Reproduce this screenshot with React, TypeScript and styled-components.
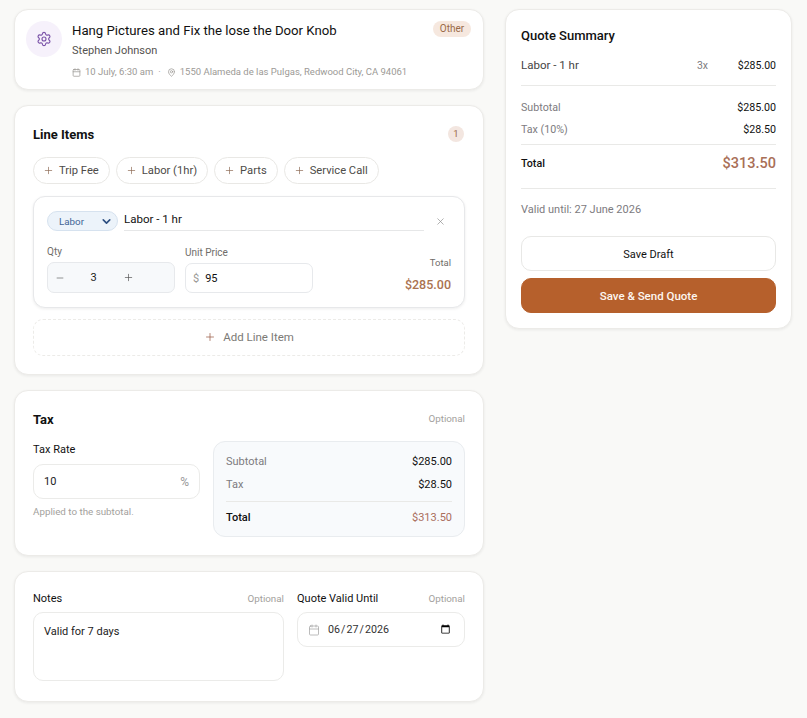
import * as React from 'react'
import styled, { createGlobalStyle } from 'styled-components'
import { Calendar, ChevronDown, MapPin, Minus, Plus, Settings, X } from 'lucide-react'

const GlobalStyle = createGlobalStyle`
  html, body {
    margin: 0;
    background: #f9f9f7;
  }
  * {
    box-sizing: border-box;
  }
  body, input, textarea, button {
    font-family: Roboto, "Noto Sans", sans-serif;
  }
`

const Page = styled.div`
  width: 807px;
  height: 718px;
  padding: 9px 15px 0 14px;
  display: grid;
  grid-template-columns: 470px 287px;
  column-gap: 21px;
  align-items: start;
  overflow: hidden;
`

const Column = styled.div`
  display: flex;
  flex-flow: column;
  gap: 15px;
`

const Card = styled.section<{ $height: number }>`
  height: ${(p) => p.$height}px;
  padding: 18px;
  background: #fff;
  border: 1px solid #ecebe8;
  border-radius: 14px;
  box-shadow: 0 1px 3px rgba(30, 30, 30, 0.07);
`

const JobCard = styled(Card)`
  display: flex;
  gap: 10px;
  padding: 11px;
  position: relative;
`

const JobIcon = styled.div`
  flex: none;
  width: 36px;
  height: 36px;
  border-radius: 50%;
  background: #f6f1fb;
  color: #7a52a8;
  display: flex;
  align-items: center;
  justify-content: center;
`

const JobBody = styled.div`
  display: flex;
  flex-flow: column;
`

const JobTitle = styled.div`
  font-size: 13.2px;
  line-height: 20px;
  font-weight: 400;
  color: #111;
`

const JobCustomer = styled.div`
  margin-top: 2px;
  font-size: 11px;
  line-height: 16px;
  color: #55534f;
`

const JobMeta = styled.div`
  margin-top: 6px;
  display: flex;
  align-items: center;
  font-size: 9.5px;
  line-height: 14px;
  color: #9c9a96;

  svg {
    margin-right: 4px;
  }
`

const MetaDot = styled.span`
  margin: 0 6px 0 5px;
`

const OtherBadge = styled.span`
  position: absolute;
  top: 11px;
  right: 12px;
  width: 38px;
  height: 16px;
  border-radius: 8px;
  background: #f6e8df;
  color: #9a6a48;
  font-size: 10px;
  line-height: 16px;
  text-align: center;
`

const CardHead = styled.div<{ $mb: number }>`
  display: flex;
  align-items: center;
  justify-content: space-between;
  height: 20px;
  margin-bottom: ${(p) => p.$mb}px;
`

const CardTitle = styled.h2`
  margin: 0;
  padding-top: 1px;
  font-size: 13px;
  line-height: 19px;
  font-weight: 700;
  color: #111;
`

const CountBadge = styled.span`
  width: 16px;
  height: 16px;
  margin-right: 1px;
  border-radius: 50%;
  background: #f3e6e0;
  color: #9a6a48;
  font-size: 9.5px;
  line-height: 16px;
  text-align: center;
`

const OptionalText = styled.span`
  font-size: 9.8px;
  line-height: 14px;
  color: #a3a19d;
`

const ChipRow = styled.div`
  display: flex;
  gap: 6px;
  margin-bottom: 12px;
`

const Chip = styled.button`
  height: 27px;
  padding: 0 10px 0 9px;
  display: flex;
  align-items: center;
  gap: 5px;
  background: #fff;
  border: 1px solid #e9e8e5;
  border-radius: 14px;
  font-size: 11.2px;
  color: #4d4b48;

  svg {
    color: #8d6a55;
  }
`

const ItemBox = styled.div`
  height: 112px;
  padding: 14px 13px 0;
  border: 1px solid #e7e8ea;
  border-radius: 12px;
  background: #fff;
  box-shadow: 0 1px 3px rgba(30, 30, 30, 0.08);
  margin-bottom: 11px;
`

const ItemTop = styled.div`
  display: flex;
  align-items: flex-start;
  margin-bottom: 14px;
`

const TypePill = styled.div`
  flex: none;
  width: 71px;
  height: 20px;
  margin-right: 6px;
  padding: 0 4px 0 11px;
  display: flex;
  align-items: center;
  justify-content: space-between;
  border: 1px solid #d6e2ef;
  border-radius: 10px;
  background: #ecf3fa;
  color: #3f6496;
  font-size: 9.8px;

  svg {
    color: #2d4f82;
  }
`

const NameInput = styled.input`
  flex: 1;
  min-width: 0;
  height: 20px;
  padding: 0 0 3px;
  border: 0;
  border-bottom: 1px solid #e6e7e8;
  outline: none;
  background: transparent;
  font-size: 11.5px;
  color: #111;
  line-height: 14px;
`

const RemoveButton = styled.button`
  flex: none;
  width: 27px;
  height: 20px;
  padding: 0 0 0 5px;
  border: 0;
  background: none;
  color: #8f8f8f;
  display: flex;
  align-items: center;
  justify-content: center;
`

const ItemFields = styled.div`
  display: grid;
  grid-template-columns: 128px 128px 1fr;
  column-gap: 10px;
`

const SmallLabel = styled.div`
  height: 14px;
  font-size: 10px;
  line-height: 14px;
  color: #6f6d69;
  margin-bottom: 3px;
`

const Stepper = styled.div`
  height: 31px;
  padding: 0 7px;
  display: flex;
  align-items: center;
  background: #f7f9fb;
  border: 1px solid #e7e9ec;
  border-radius: 7px;
  color: #555;
`

const StepperValue = styled.span`
  width: 43px;
  text-align: center;
  font-size: 11px;
  color: #222;
  margin-left: 7px;
  margin-right: 8px;
`

const PriceColumn = styled.div`
  padding-top: 1px;
`

const PriceField = styled.div`
  height: 30px;
  padding: 0 7px;
  display: flex;
  align-items: center;
  gap: 6px;
  border: 1px solid #e7e9ec;
  border-radius: 7px;
  background: #fff;
  font-size: 11px;
  color: #111;
`

const Prefix = styled.span`
  color: #9a9894;
`

const ItemTotal = styled.div`
  display: flex;
  flex-flow: column;
  align-items: flex-end;
  padding-top: 11px;
`

const ItemTotalLabel = styled.div`
  font-size: 9.5px;
  line-height: 14px;
  color: #6f6d69;
`

const ItemTotalValue = styled.div`
  margin-top: 7px;
  font-size: 12.5px;
  line-height: 16px;
  font-weight: 500;
  color: #ab7350;
`

const AddLine = styled.button`
  width: 100%;
  height: 37px;
  padding: 0 0 2px;
  display: flex;
  align-items: center;
  justify-content: center;
  gap: 7px;
  border: 1px dashed #ecebe8;
  border-radius: 10px;
  background: #fff;
  font-size: 11.5px;
  font-weight: 400;
  color: #7c7a76;

  svg {
    color: #9b5f4a;
  }
`

const TaxGrid = styled.div`
  display: grid;
  grid-template-columns: 167px 252px;
  column-gap: 13px;
`

const FieldLabel = styled.div`
  font-size: 11px;
  line-height: 16px;
  font-weight: 400;
  color: #111;
`

const TaxRateLabel = styled(FieldLabel)`
  padding-top: 1px;
`

const TaxInput = styled.div`
  height: 35px;
  margin-top: 6px;
  padding: 0 10px;
  display: flex;
  align-items: center;
  justify-content: space-between;
  border: 1px solid #ebebe9;
  border-radius: 10px;
  font-size: 11px;
  color: #222;
`

const Suffix = styled.span`
  color: #999;
  font-size: 12px;
`

const Hint = styled.div`
  margin-top: 6px;
  font-size: 9.8px;
  line-height: 14px;
  color: #a3a19d;
`

const TaxBox = styled.div`
  height: 96px;
  padding: 8px 12px 0;
  border: 1px solid #e9ecef;
  border-radius: 12px;
  background: #f8fafc;
`

const Row = styled.div<{ $h: number }>`
  display: flex;
  align-items: center;
  justify-content: space-between;
  height: ${(p) => p.$h}px;
  font-size: 11px;
  color: #111;
`

const Muted = styled.span`
  color: #7d7b80;
`

const Strong = styled.span`
  font-weight: 500;
  color: #111;
`

const Accent = styled.span`
  color: #aa6e5c;
`

const Rule = styled.hr<{ $top?: number; $bottom?: number }>`
  margin: ${(p) => p.$top ?? 0}px 0 ${(p) => p.$bottom ?? 0}px;
  border: 0;
  border-top: 1px solid #e9e9e7;
`

const NotesGrid = styled.div`
  display: grid;
  grid-template-columns: 251px 168px;
  column-gap: 13px;
`

const LabelRow = styled.div`
  display: flex;
  align-items: center;
  justify-content: space-between;
  height: 16px;
  padding-top: 2px;
  margin-bottom: 6px;
`

const NotesArea = styled.textarea`
  display: block;
  width: 100%;
  height: 69px;
  padding: 11px 10px;
  resize: none;
  border: 1px solid #ebebe9;
  border-radius: 10px;
  outline: none;
  font-size: 11px;
  line-height: 16px;
  color: #222;
`

const DateField = styled.div`
  height: 35px;
  padding: 0 11px 0 10px;
  display: flex;
  align-items: center;
  gap: 7px;
  border: 1px solid #ebebe9;
  border-radius: 10px;
  color: #a5a5a5;
`

const DateInput = styled.input`
  flex: 1;
  min-width: 0;
  padding: 0;
  border: 0;
  outline: none;
  background: none;
  font-size: 10.7px;
  color: #333;
`

const SummaryCard = styled(Card)`
  padding: 16px 15px;
`

const SummaryTitle = styled.div`
  font-size: 13px;
  line-height: 20px;
  font-weight: 500;
  color: #111;
  margin-bottom: 10px;
`

const SummaryItem = styled.div`
  display: grid;
  grid-template-columns: 1fr auto 68px;
  height: 18px;
  align-items: center;
  font-size: 11.5px;
  color: #444;
`

const SummaryCount = styled.span`
  font-size: 10.5px;
  color: #7d7b80;
`

const Amount = styled.span`
  font-size: 10.5px;
  color: #111;
  text-align: right;
`

const SummaryRow = styled(Row)`
  font-size: 10.7px;
`

const GrandTotal = styled.span`
  font-size: 14.5px;
  font-weight: 500;
  color: #a96f57;
`

const ValidUntil = styled.div`
  margin: 13px 0 18px;
  font-size: 11px;
  line-height: 16px;
  color: #7d7b80;
`

const ActionButton = styled.button<{ $primary?: boolean }>`
  display: block;
  width: 100%;
  height: 35px;
  margin-bottom: 7px;
  padding: 1px 0 0;
  border-radius: 10px;
  border: 1px solid ${(p) => (p.$primary ? '#b6602c' : '#e8e8e6')};
  background: ${(p) => (p.$primary ? '#b6602c' : '#fff')};
  color: ${(p) => (p.$primary ? '#fdf6f0' : '#111')};
  font-size: ${(p) => (p.$primary ? 11.5 : 11)}px;
  font-weight: ${(p) => (p.$primary ? 500 : 400)};
`

const quickItems = ['Trip Fee', 'Labor (1hr)', 'Parts', 'Service Call']

export default function App() {
  return (
    <Page>
      <GlobalStyle />
      <Column>
        <JobCard $height={81}>
          <JobIcon>
            <Settings size={16} strokeWidth={1.7} />
          </JobIcon>
          <JobBody>
            <JobTitle>Hang Pictures and Fix the lose the Door Knob</JobTitle>
            <JobCustomer>Stephen Johnson</JobCustomer>
            <JobMeta>
              <Calendar size={9} />
              10 July, 6:30 am
              <MetaDot>·</MetaDot>
              <MapPin size={9} />
              1550 Alameda de las Pulgas, Redwood City, CA 94061
            </JobMeta>
          </JobBody>
          <OtherBadge>Other</OtherBadge>
        </JobCard>

        <Card $height={270}>
          <CardHead $mb={13}>
            <CardTitle>Line Items</CardTitle>
            <CountBadge>1</CountBadge>
          </CardHead>
          <ChipRow>
            {quickItems.map((label) => (
              <Chip key={label}>
                <Plus size={11} strokeWidth={1.5} />
                {label}
              </Chip>
            ))}
          </ChipRow>
          <ItemBox>
            <ItemTop>
              <TypePill>
                Labor
                <ChevronDown size={13} strokeWidth={3} />
              </TypePill>
              <NameInput readOnly value="Labor - 1 hr" />
              <RemoveButton>
                <X size={11} strokeWidth={1.5} />
              </RemoveButton>
            </ItemTop>
            <ItemFields>
              <div>
                <SmallLabel>Qty</SmallLabel>
                <Stepper>
                  <Minus size={10} strokeWidth={1.5} />
                  <StepperValue>3</StepperValue>
                  <Plus size={11} strokeWidth={1.5} />
                </Stepper>
              </div>
              <PriceColumn>
                <SmallLabel>Unit Price</SmallLabel>
                <PriceField>
                  <Prefix>$</Prefix>
                  95
                </PriceField>
              </PriceColumn>
              <ItemTotal>
                <ItemTotalLabel>Total</ItemTotalLabel>
                <ItemTotalValue>$285.00</ItemTotalValue>
              </ItemTotal>
            </ItemFields>
          </ItemBox>
          <AddLine>
            <Plus size={12} strokeWidth={1.5} />
            Add Line Item
          </AddLine>
        </Card>

        <Card $height={166}>
          <CardHead $mb={12}>
            <CardTitle>Tax</CardTitle>
            <OptionalText>Optional</OptionalText>
          </CardHead>
          <TaxGrid>
            <div>
              <TaxRateLabel>Tax Rate</TaxRateLabel>
              <TaxInput>
                10
                <Suffix>%</Suffix>
              </TaxInput>
              <Hint>Applied to the subtotal.</Hint>
            </div>
            <TaxBox>
              <Row $h={23}>
                <Muted>Subtotal</Muted>
                $285.00
              </Row>
              <Row $h={23}>
                <Muted>Tax</Muted>
                $28.50
              </Row>
              <Rule $top={5} />
              <Row $h={31}>
                <Strong>Total</Strong>
                <Accent>$313.50</Accent>
              </Row>
            </TaxBox>
          </TaxGrid>
        </Card>

        <Card $height={131}>
          <NotesGrid>
            <div>
              <LabelRow>
                <FieldLabel>Notes</FieldLabel>
                <OptionalText>Optional</OptionalText>
              </LabelRow>
              <NotesArea readOnly value="Valid for 7 days" />
            </div>
            <div>
              <LabelRow>
                <FieldLabel>Quote Valid Until</FieldLabel>
                <OptionalText>Optional</OptionalText>
              </LabelRow>
              <DateField>
                <Calendar size={12} strokeWidth={1.5} />
                <DateInput type="date" defaultValue="2026-06-27" />
              </DateField>
            </div>
          </NotesGrid>
        </Card>
      </Column>

      <SummaryCard $height={320}>
        <SummaryTitle>Quote Summary</SummaryTitle>
        <SummaryItem>
          Labor - 1 hr
          <SummaryCount>3x</SummaryCount>
          <Amount>$285.00</Amount>
        </SummaryItem>
        <Rule $top={11} $bottom={10} />
        <SummaryRow $h={22}>
          <Muted>Subtotal</Muted>
          $285.00
        </SummaryRow>
        <SummaryRow $h={22}>
          <Muted>Tax (10%)</Muted>
          $28.50
        </SummaryRow>
        <Rule $top={4} />
        <SummaryRow $h={37}>
          <Strong>Total</Strong>
          <GrandTotal>$313.50</GrandTotal>
        </SummaryRow>
        <Rule $top={6} />
        <ValidUntil>Valid until: 27 June 2026</ValidUntil>
        <ActionButton>Save Draft</ActionButton>
        <ActionButton $primary>Save &amp; Send Quote</ActionButton>
      </SummaryCard>
    </Page>
  )
}
